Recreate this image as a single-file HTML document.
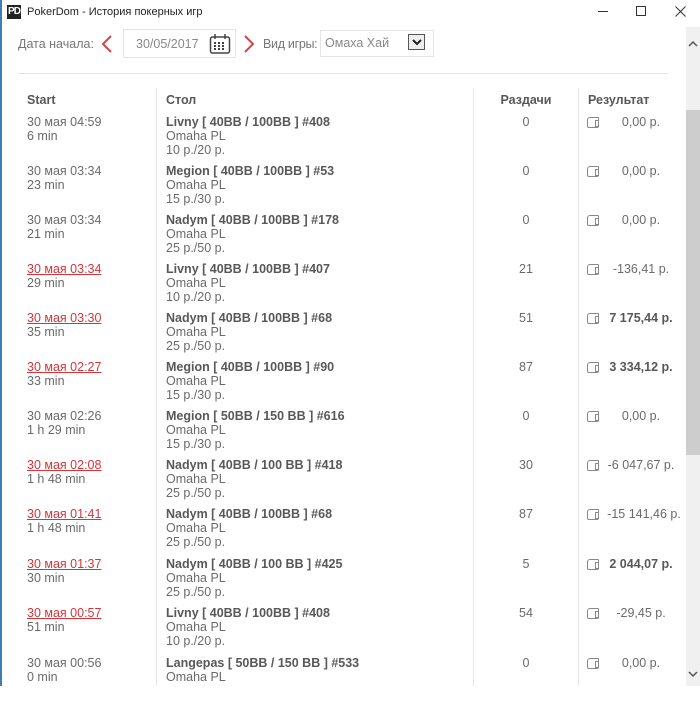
<!DOCTYPE html>
<html><head><meta charset="utf-8"><style>
*{margin:0;padding:0;box-sizing:border-box}
body{width:700px;height:686px;overflow:hidden;background:#fff;font-family:"Liberation Sans",Arial,sans-serif;color:#6a6a6a;font-size:12.5px;position:relative}
.abs{position:absolute}
.lb{position:absolute;left:0;top:0;width:2px;height:686px;background:#3f7fae}
.title{left:27px;top:6px;font-size:11px;color:#222}
.logo{left:7px;top:5px;width:14px;height:14px;background:#222;color:#fff;font-size:10px;font-weight:bold;line-height:14px;text-align:center;letter-spacing:-1px}
.row{position:absolute;left:0;width:686px;height:49px;line-height:14px}
.c1{position:absolute;left:27px;top:0}
.c2{position:absolute;left:166px;top:0}
.c3{position:absolute;left:480px;width:92px;text-align:center;top:0}
.c4{position:absolute;left:602px;width:78px;text-align:center;top:0}
.b{font-weight:bold;color:#585858}
.red{color:#d4353b;text-decoration:underline}
.w{position:absolute;left:587px;top:2px;width:12px;height:11px;border:1px solid #888;border-radius:3px 1px 2px 2px}
.w:before{content:"";position:absolute;right:-1px;top:2px;width:3px;height:5px;border:1px solid #888;border-right:none}
.vl{position:absolute;top:88px;bottom:0;width:1px;background:#e6e6e6}
</style></head><body>
<div class="lb"></div>
<div class="abs logo">PD</div>
<div class="abs title">PokerDom - История покерных игр</div>
<div class="abs" style="left:598px;top:11px;width:10px;height:1px;background:#333"></div>
<div class="abs" style="left:636px;top:6px;width:10px;height:10px;border:1px solid #333"></div>
<svg class="abs" style="left:675px;top:6px" width="11" height="11"><path d="M0.5 0.5 L10.5 10.5 M10.5 0.5 L0.5 10.5" stroke="#333" stroke-width="1"/></svg>
<div class="abs" style="left:18px;top:37px;font-size:12.5px;color:#777">Дата начала:</div>
<svg class="abs" style="left:100px;top:34px" width="14" height="20"><path d="M11 2 L3 10 L11 18" stroke="#d4454a" stroke-width="2" fill="none"/></svg>
<div class="abs" style="left:123px;top:29px;width:113px;height:29px;border:1px solid #e4e4e4"></div>
<div class="abs" style="left:136px;top:37px;font-size:12.5px;color:#888">30/05/2017</div>
<svg class="abs" style="left:209px;top:33px" width="22" height="22"><rect x="1.5" y="4" width="19" height="16" rx="2" fill="none" stroke="#444" stroke-width="1.5"/><line x1="6" y1="1" x2="6" y2="6" stroke="#444" stroke-width="1.5"/><line x1="16" y1="1" x2="16" y2="6" stroke="#444" stroke-width="1.5"/><g fill="#444"><rect x="5" y="9" width="2" height="2"/><rect x="9" y="9" width="2" height="2"/><rect x="13" y="9" width="2" height="2"/><rect x="5" y="12" width="2" height="2"/><rect x="9" y="12" width="2" height="2"/><rect x="13" y="12" width="2" height="2"/><rect x="5" y="15" width="2" height="2"/><rect x="9" y="15" width="2" height="2"/><rect x="13" y="15" width="2" height="2"/></g></svg>
<svg class="abs" style="left:242px;top:34px" width="14" height="20"><path d="M3 2 L11 10 L3 18" stroke="#d4454a" stroke-width="2" fill="none"/></svg>
<div class="abs" style="left:263px;top:37px;font-size:12.5px;color:#777;letter-spacing:-0.3px">Вид игры:</div>
<div class="abs" style="left:320px;top:30px;width:114px;height:27px;border:1px solid #e4e4e4;background:#fff"></div>
<div class="abs" style="left:325px;top:36px;font-size:12.5px;color:#888">Омаха Хай</div>
<div class="abs" style="left:408px;top:34px;width:17px;height:16px;border:1px solid #555;background:#eee"></div>
<svg class="abs" style="left:411px;top:37px" width="12" height="10"><path d="M2 3 L6 7 L10 3" stroke="#222" stroke-width="2" fill="none"/></svg>
<div class="abs" style="left:18px;top:73px;width:650px;height:1px;background:#e4e4e4"></div>
<div class="abs" style="left:686px;top:27px;width:14px;height:659px;background:#f0f0f0"></div>
<div class="abs" style="left:686px;top:110px;width:14px;height:345px;background:#cdcdcd"></div>
<svg class="abs" style="left:688px;top:40px" width="10" height="8"><path d="M1 6 L5 2 L9 6" stroke="#555" stroke-width="1.5" fill="none"/></svg>
<svg class="abs" style="left:688px;top:670px" width="10" height="8"><path d="M1 2 L5 6 L9 2" stroke="#555" stroke-width="1.5" fill="none"/></svg>
<div class="vl" style="left:156px"></div>
<div class="vl" style="left:473px"></div>
<div class="vl" style="left:578px"></div>
<div class="row" style="top:93px"><div class="c1 b">Start</div><div class="c2 b">Стол</div><div class="c3 b">Раздачи</div><div class="abs b" style="left:588px">Результат</div></div>

<div class="row" style="top:115px"><div class="c1">30 мая 04:59<br>6 min</div><div class="c2"><span class="b">Livny [ 40BB / 100BB ] #408</span><br>Omaha PL<br>10 р./20 р.</div><div class="c3">0</div><div class="w"></div><div class="c4">0,00 р.</div></div>
<div class="row" style="top:164px"><div class="c1">30 мая 03:34<br>23 min</div><div class="c2"><span class="b">Megion [ 40BB / 100BB ] #53</span><br>Omaha PL<br>15 р./30 р.</div><div class="c3">0</div><div class="w"></div><div class="c4">0,00 р.</div></div>
<div class="row" style="top:213px"><div class="c1">30 мая 03:34<br>21 min</div><div class="c2"><span class="b">Nadym [ 40BB / 100BB ] #178</span><br>Omaha PL<br>25 р./50 р.</div><div class="c3">0</div><div class="w"></div><div class="c4">0,00 р.</div></div>
<div class="row" style="top:262px"><div class="c1"><span class="red">30 мая 03:34</span><br>29 min</div><div class="c2"><span class="b">Livny [ 40BB / 100BB ] #407</span><br>Omaha PL<br>10 р./20 р.</div><div class="c3">21</div><div class="w"></div><div class="c4">-136,41 р.</div></div>
<div class="row" style="top:311px"><div class="c1"><span class="red">30 мая 03:30</span><br>35 min</div><div class="c2"><span class="b">Nadym [ 40BB / 100BB ] #68</span><br>Omaha PL<br>25 р./50 р.</div><div class="c3">51</div><div class="w"></div><div class="c4 b">7 175,44 р.</div></div>
<div class="row" style="top:360px"><div class="c1"><span class="red">30 мая 02:27</span><br>33 min</div><div class="c2"><span class="b">Megion [ 40BB / 100BB ] #90</span><br>Omaha PL<br>15 р./30 р.</div><div class="c3">87</div><div class="w"></div><div class="c4 b">3 334,12 р.</div></div>
<div class="row" style="top:409px"><div class="c1">30 мая 02:26<br>1 h 29 min</div><div class="c2"><span class="b">Megion [ 50BB / 150 BB ] #616</span><br>Omaha PL<br>15 р./30 р.</div><div class="c3">0</div><div class="w"></div><div class="c4">0,00 р.</div></div>
<div class="row" style="top:458px"><div class="c1"><span class="red">30 мая 02:08</span><br>1 h 48 min</div><div class="c2"><span class="b">Nadym [ 40BB / 100 BB ] #418</span><br>Omaha PL<br>25 р./50 р.</div><div class="c3">30</div><div class="w"></div><div class="c4">-6 047,67 р.</div></div>
<div class="row" style="top:507px"><div class="c1"><span class="red">30 мая 01:41</span><br>1 h 48 min</div><div class="c2"><span class="b">Nadym [ 40BB / 100BB ] #68</span><br>Omaha PL<br>25 р./50 р.</div><div class="c3">87</div><div class="w"></div><div class="c4" style="left:605px">-15 141,46 р.</div></div>
<div class="row" style="top:557px"><div class="c1"><span class="red">30 мая 01:37</span><br>30 min</div><div class="c2"><span class="b">Nadym [ 40BB / 100 BB ] #425</span><br>Omaha PL<br>25 р./50 р.</div><div class="c3">5</div><div class="w"></div><div class="c4 b">2 044,07 р.</div></div>
<div class="row" style="top:606px"><div class="c1"><span class="red">30 мая 00:57</span><br>51 min</div><div class="c2"><span class="b">Livny [ 40BB / 100BB ] #408</span><br>Omaha PL<br>10 р./20 р.</div><div class="c3">54</div><div class="w"></div><div class="c4">-29,45 р.</div></div>
<div class="row" style="top:656px"><div class="c1">30 мая 00:56<br>0 min</div><div class="c2"><span class="b">Langepas [ 50BB / 150 BB ] #533</span><br>Omaha PL</div><div class="c3">0</div><div class="w"></div><div class="c4">0,00 р.</div></div>
</body></html>
